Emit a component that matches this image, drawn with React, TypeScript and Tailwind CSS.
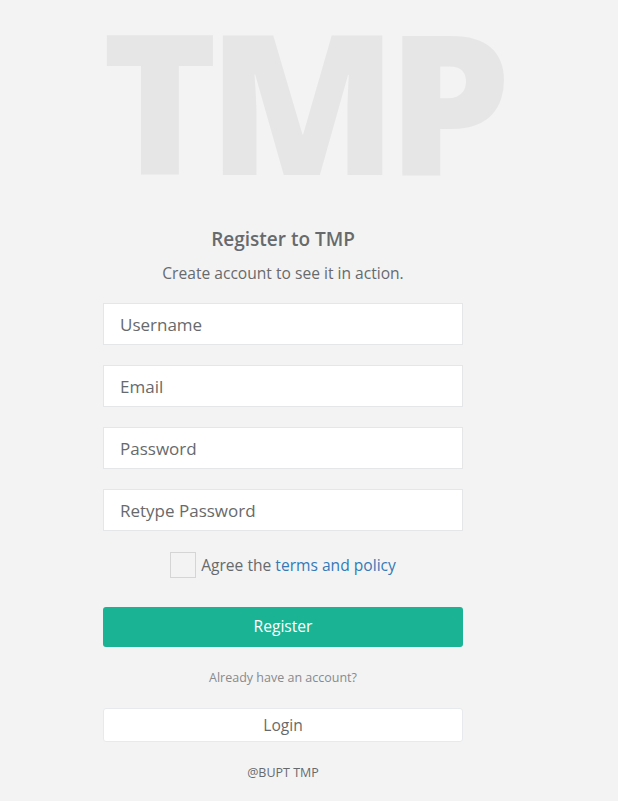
import React from "react";

export default function App() {
  const font = { fontFamily: '"Open Sans", "Noto Sans", sans-serif' };
  return (
    <div className="min-h-[801px] w-full bg-[#f3f3f4] text-[#676a6c]" style={font}>
      <div className="ml-[103px] w-[360px] pt-[2px]">
        <div className="h-[200px] w-[440px] whitespace-nowrap">
          <h1 className="ml-[-1px] mt-[2px] text-[196px] font-extrabold leading-[190px] tracking-[-10px] text-[#e6e6e6]">
            TMP
          </h1>
        </div>
        <div className="text-center">
          <h3 className="mt-[23px] text-[19px] font-semibold leading-[24px]">Register to TMP</h3>
          <p className="mt-[11px] text-[15.6px] leading-[22px]">Create account to see it in action.</p>
        </div>
        <form className="mt-[19px] flex flex-col gap-[20px]">
          {["Username", "Email", "Password", "Retype Password"].map((p) => (
            <input
              key={p}
              placeholder={p}
              type={p.includes("Password") ? "password" : "text"}
              className="h-[42px] w-full border border-[#e5e6e7] bg-white px-[16px] text-[17px] text-[#676a6c] outline-none placeholder:text-[#676a6c]"
              style={font}
            />
          ))}
        </form>
        <div className="mt-[21px] flex items-center justify-center gap-[5px]">
          <span className="block h-[26px] w-[26px] border border-[#d5d5d5] bg-[#f3f3f4]"></span>
          <span className="text-[15.6px] leading-[22px]">
            Agree the <a className="text-[#337ab7]">terms and policy</a>
          </span>
        </div>
        <button className="mt-[29px] h-[40px] w-full rounded-[3px] bg-[#1ab394] text-[15.6px] text-white" style={font}>
          Register
        </button>
        <p className="mt-[22px] text-center text-[12.5px] leading-[17px] text-[#888a8c]">Already have an account?</p>
        <button className="mt-[22px] h-[34px] w-full rounded-[3px] border border-[#e7eaec] bg-white pt-[1px] text-[15.6px] text-[#676a6c]" style={font}>
          Login
        </button>
        <p className="mt-[22px] text-center text-[12.5px] leading-[17px]">@BUPT TMP</p>
      </div>
    </div>
  );
}
